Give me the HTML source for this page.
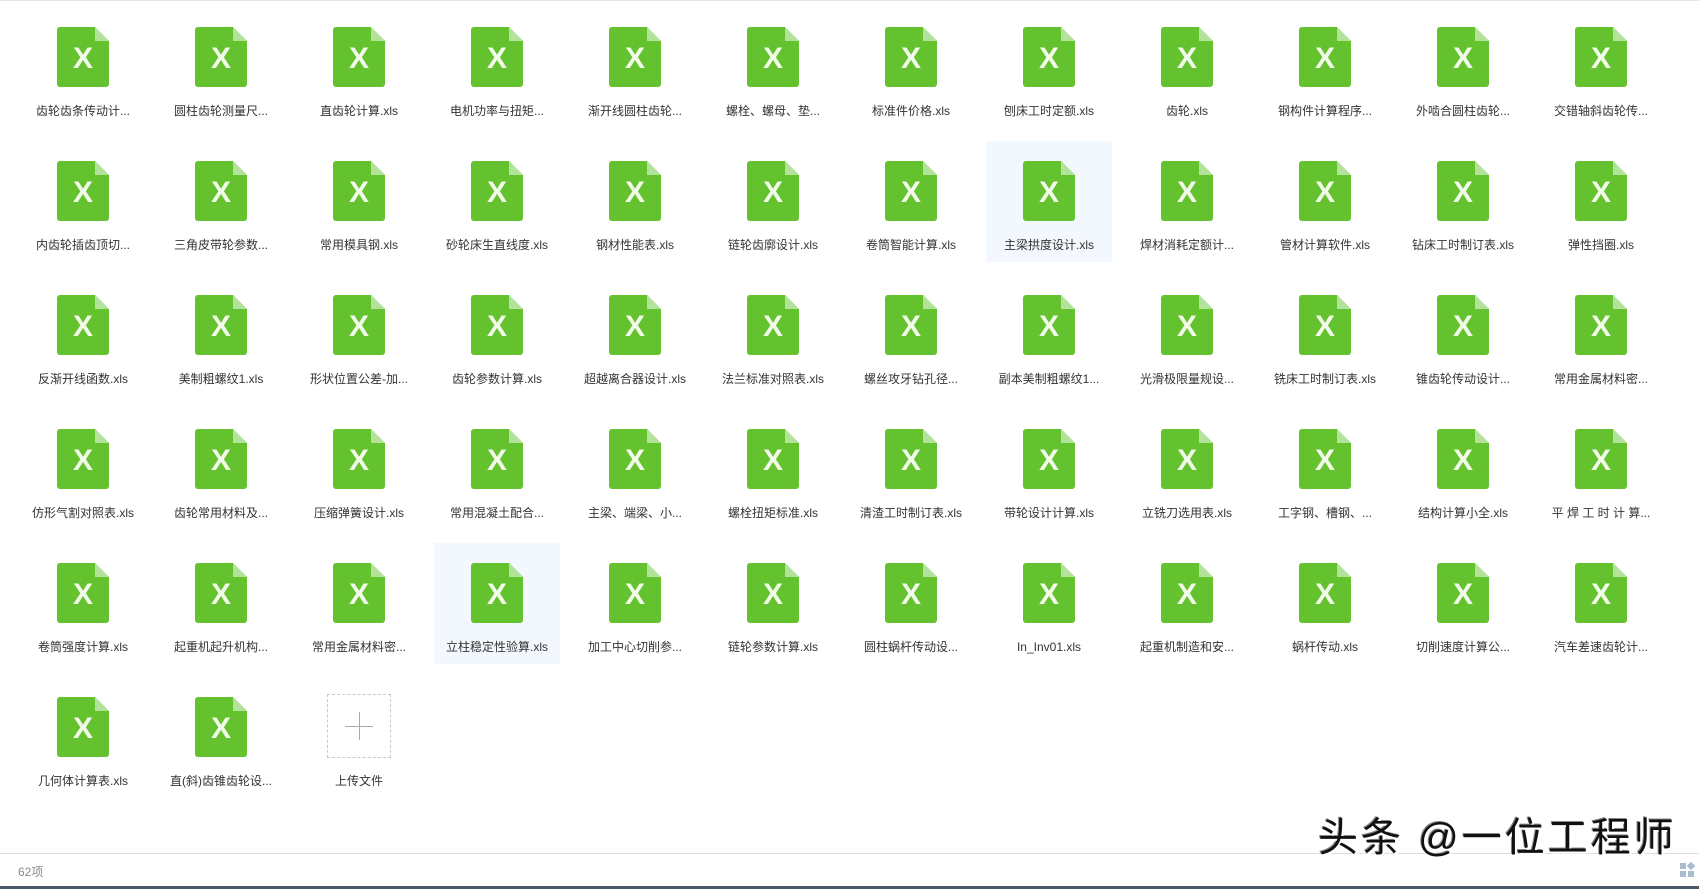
<!DOCTYPE html>
<html><head><meta charset="utf-8"><style>
*{margin:0;padding:0;box-sizing:border-box}
html,body{width:1699px;height:889px;overflow:hidden;background:#fff;font-family:"Liberation Sans","Noto Sans CJK SC",sans-serif}
.top{position:absolute;left:0;top:0;width:1699px;height:1px;background:#e4e4e4}
.grid{position:absolute;left:14px;top:7px;display:grid;grid-template-columns:repeat(12,138px);grid-auto-rows:134px}
.c{position:relative;width:126px;height:121px;margin-left:6px}
.c.h{background:#f2f8fd}
.ic{position:absolute;left:37px;top:20px;width:52px;height:60px;background:#63c22d;border-radius:3px;clip-path:polygon(0 0,38px 0,52px 14px,52px 60px,0 60px)}
.ic::before{content:"";position:absolute;right:0;top:0;width:14px;height:14px;background:#b3e39a;clip-path:polygon(0 0,100% 100%,0 100%)}
.ic span{position:absolute;left:0;right:0;top:14px;text-align:center;color:#f2fbe9;font:bold 30px/36px "Liberation Sans",sans-serif}
.t{position:absolute;left:-6px;right:-6px;top:96px;text-align:center;font-size:12px;line-height:16px;color:#333;white-space:nowrap}
.up{position:absolute;left:31px;top:17px;width:64px;height:64px;border:1px dashed #c8c8c8}
.up::before{content:"";position:absolute;left:17px;top:31px;width:28px;height:1px;background:#aaa}
.up::after{content:"";position:absolute;left:31px;top:17px;width:1px;height:28px;background:#aaa}
.bar{position:absolute;left:0;top:853px;width:1699px;height:1px;background:#ddd}
.cnt{position:absolute;left:18px;top:863px;font-size:12px;color:#888}
.bot{position:absolute;left:0;top:886px;width:1699px;height:3px;background:#4a5a6a}
.wm{position:absolute;left:1318px;top:814px;font-size:40px;line-height:48px;font-weight:normal;color:#111;letter-spacing:3px;text-shadow:2px 2px 0 #fff,-1px -1px 0 #888;white-space:nowrap}
.gi{position:absolute;left:1680px;top:863px;width:14px;height:14px}
.gi i{position:absolute;width:6px;height:6px;background:#a9bccf}
</style></head><body>
<div class="top"></div>
<div class="grid">
<div class="c"><div class="ic"><span>X</span></div><div class="t">齿轮齿条传动计...</div></div>
<div class="c"><div class="ic"><span>X</span></div><div class="t">圆柱齿轮测量尺...</div></div>
<div class="c"><div class="ic"><span>X</span></div><div class="t">直齿轮计算.xls</div></div>
<div class="c"><div class="ic"><span>X</span></div><div class="t">电机功率与扭矩...</div></div>
<div class="c"><div class="ic"><span>X</span></div><div class="t">渐开线圆柱齿轮...</div></div>
<div class="c"><div class="ic"><span>X</span></div><div class="t">螺栓、螺母、垫...</div></div>
<div class="c"><div class="ic"><span>X</span></div><div class="t">标准件价格.xls</div></div>
<div class="c"><div class="ic"><span>X</span></div><div class="t">刨床工时定额.xls</div></div>
<div class="c"><div class="ic"><span>X</span></div><div class="t">齿轮.xls</div></div>
<div class="c"><div class="ic"><span>X</span></div><div class="t">钢构件计算程序...</div></div>
<div class="c"><div class="ic"><span>X</span></div><div class="t">外啮合圆柱齿轮...</div></div>
<div class="c"><div class="ic"><span>X</span></div><div class="t">交错轴斜齿轮传...</div></div>

<div class="c"><div class="ic"><span>X</span></div><div class="t">内齿轮插齿顶切...</div></div>
<div class="c"><div class="ic"><span>X</span></div><div class="t">三角皮带轮参数...</div></div>
<div class="c"><div class="ic"><span>X</span></div><div class="t">常用模具钢.xls</div></div>
<div class="c"><div class="ic"><span>X</span></div><div class="t">砂轮床生直线度.xls</div></div>
<div class="c"><div class="ic"><span>X</span></div><div class="t">钢材性能表.xls</div></div>
<div class="c"><div class="ic"><span>X</span></div><div class="t">链轮齿廓设计.xls</div></div>
<div class="c"><div class="ic"><span>X</span></div><div class="t">卷筒智能计算.xls</div></div>
<div class="c h"><div class="ic"><span>X</span></div><div class="t">主梁拱度设计.xls</div></div>
<div class="c"><div class="ic"><span>X</span></div><div class="t">焊材消耗定额计...</div></div>
<div class="c"><div class="ic"><span>X</span></div><div class="t">管材计算软件.xls</div></div>
<div class="c"><div class="ic"><span>X</span></div><div class="t">钻床工时制订表.xls</div></div>
<div class="c"><div class="ic"><span>X</span></div><div class="t">弹性挡圈.xls</div></div>

<div class="c"><div class="ic"><span>X</span></div><div class="t">反渐开线函数.xls</div></div>
<div class="c"><div class="ic"><span>X</span></div><div class="t">美制粗螺纹1.xls</div></div>
<div class="c"><div class="ic"><span>X</span></div><div class="t">形状位置公差-加...</div></div>
<div class="c"><div class="ic"><span>X</span></div><div class="t">齿轮参数计算.xls</div></div>
<div class="c"><div class="ic"><span>X</span></div><div class="t">超越离合器设计.xls</div></div>
<div class="c"><div class="ic"><span>X</span></div><div class="t">法兰标准对照表.xls</div></div>
<div class="c"><div class="ic"><span>X</span></div><div class="t">螺丝攻牙钻孔径...</div></div>
<div class="c"><div class="ic"><span>X</span></div><div class="t">副本美制粗螺纹1...</div></div>
<div class="c"><div class="ic"><span>X</span></div><div class="t">光滑极限量规设...</div></div>
<div class="c"><div class="ic"><span>X</span></div><div class="t">铣床工时制订表.xls</div></div>
<div class="c"><div class="ic"><span>X</span></div><div class="t">锥齿轮传动设计...</div></div>
<div class="c"><div class="ic"><span>X</span></div><div class="t">常用金属材料密...</div></div>

<div class="c"><div class="ic"><span>X</span></div><div class="t">仿形气割对照表.xls</div></div>
<div class="c"><div class="ic"><span>X</span></div><div class="t">齿轮常用材料及...</div></div>
<div class="c"><div class="ic"><span>X</span></div><div class="t">压缩弹簧设计.xls</div></div>
<div class="c"><div class="ic"><span>X</span></div><div class="t">常用混凝土配合...</div></div>
<div class="c"><div class="ic"><span>X</span></div><div class="t">主梁、端梁、小...</div></div>
<div class="c"><div class="ic"><span>X</span></div><div class="t">螺栓扭矩标准.xls</div></div>
<div class="c"><div class="ic"><span>X</span></div><div class="t">清渣工时制订表.xls</div></div>
<div class="c"><div class="ic"><span>X</span></div><div class="t">带轮设计计算.xls</div></div>
<div class="c"><div class="ic"><span>X</span></div><div class="t">立铣刀选用表.xls</div></div>
<div class="c"><div class="ic"><span>X</span></div><div class="t">工字钢、槽钢、...</div></div>
<div class="c"><div class="ic"><span>X</span></div><div class="t">结构计算小全.xls</div></div>
<div class="c"><div class="ic"><span>X</span></div><div class="t">平 焊 工 时 计 算...</div></div>

<div class="c"><div class="ic"><span>X</span></div><div class="t">卷筒强度计算.xls</div></div>
<div class="c"><div class="ic"><span>X</span></div><div class="t">起重机起升机构...</div></div>
<div class="c"><div class="ic"><span>X</span></div><div class="t">常用金属材料密...</div></div>
<div class="c h"><div class="ic"><span>X</span></div><div class="t">立柱稳定性验算.xls</div></div>
<div class="c"><div class="ic"><span>X</span></div><div class="t">加工中心切削参...</div></div>
<div class="c"><div class="ic"><span>X</span></div><div class="t">链轮参数计算.xls</div></div>
<div class="c"><div class="ic"><span>X</span></div><div class="t">圆柱蜗杆传动设...</div></div>
<div class="c"><div class="ic"><span>X</span></div><div class="t">In_Inv01.xls</div></div>
<div class="c"><div class="ic"><span>X</span></div><div class="t">起重机制造和安...</div></div>
<div class="c"><div class="ic"><span>X</span></div><div class="t">蜗杆传动.xls</div></div>
<div class="c"><div class="ic"><span>X</span></div><div class="t">切削速度计算公...</div></div>
<div class="c"><div class="ic"><span>X</span></div><div class="t">汽车差速齿轮计...</div></div>

<div class="c"><div class="ic"><span>X</span></div><div class="t">几何体计算表.xls</div></div>
<div class="c"><div class="ic"><span>X</span></div><div class="t">直(斜)齿锥齿轮设...</div></div>
<div class="c"><div class="up"></div><div class="t">上传文件</div></div>
</div>
<div class="bar"></div>
<div class="cnt">62项</div>
<div class="wm">头条 @一位工程师</div>
<div class="gi"><i style="left:0;top:0"></i><i style="left:8px;top:0;transform:rotate(45deg)"></i><i style="left:0;top:8px"></i><i style="left:8px;top:8px"></i></div>
<div class="bot"></div>
</body></html>
